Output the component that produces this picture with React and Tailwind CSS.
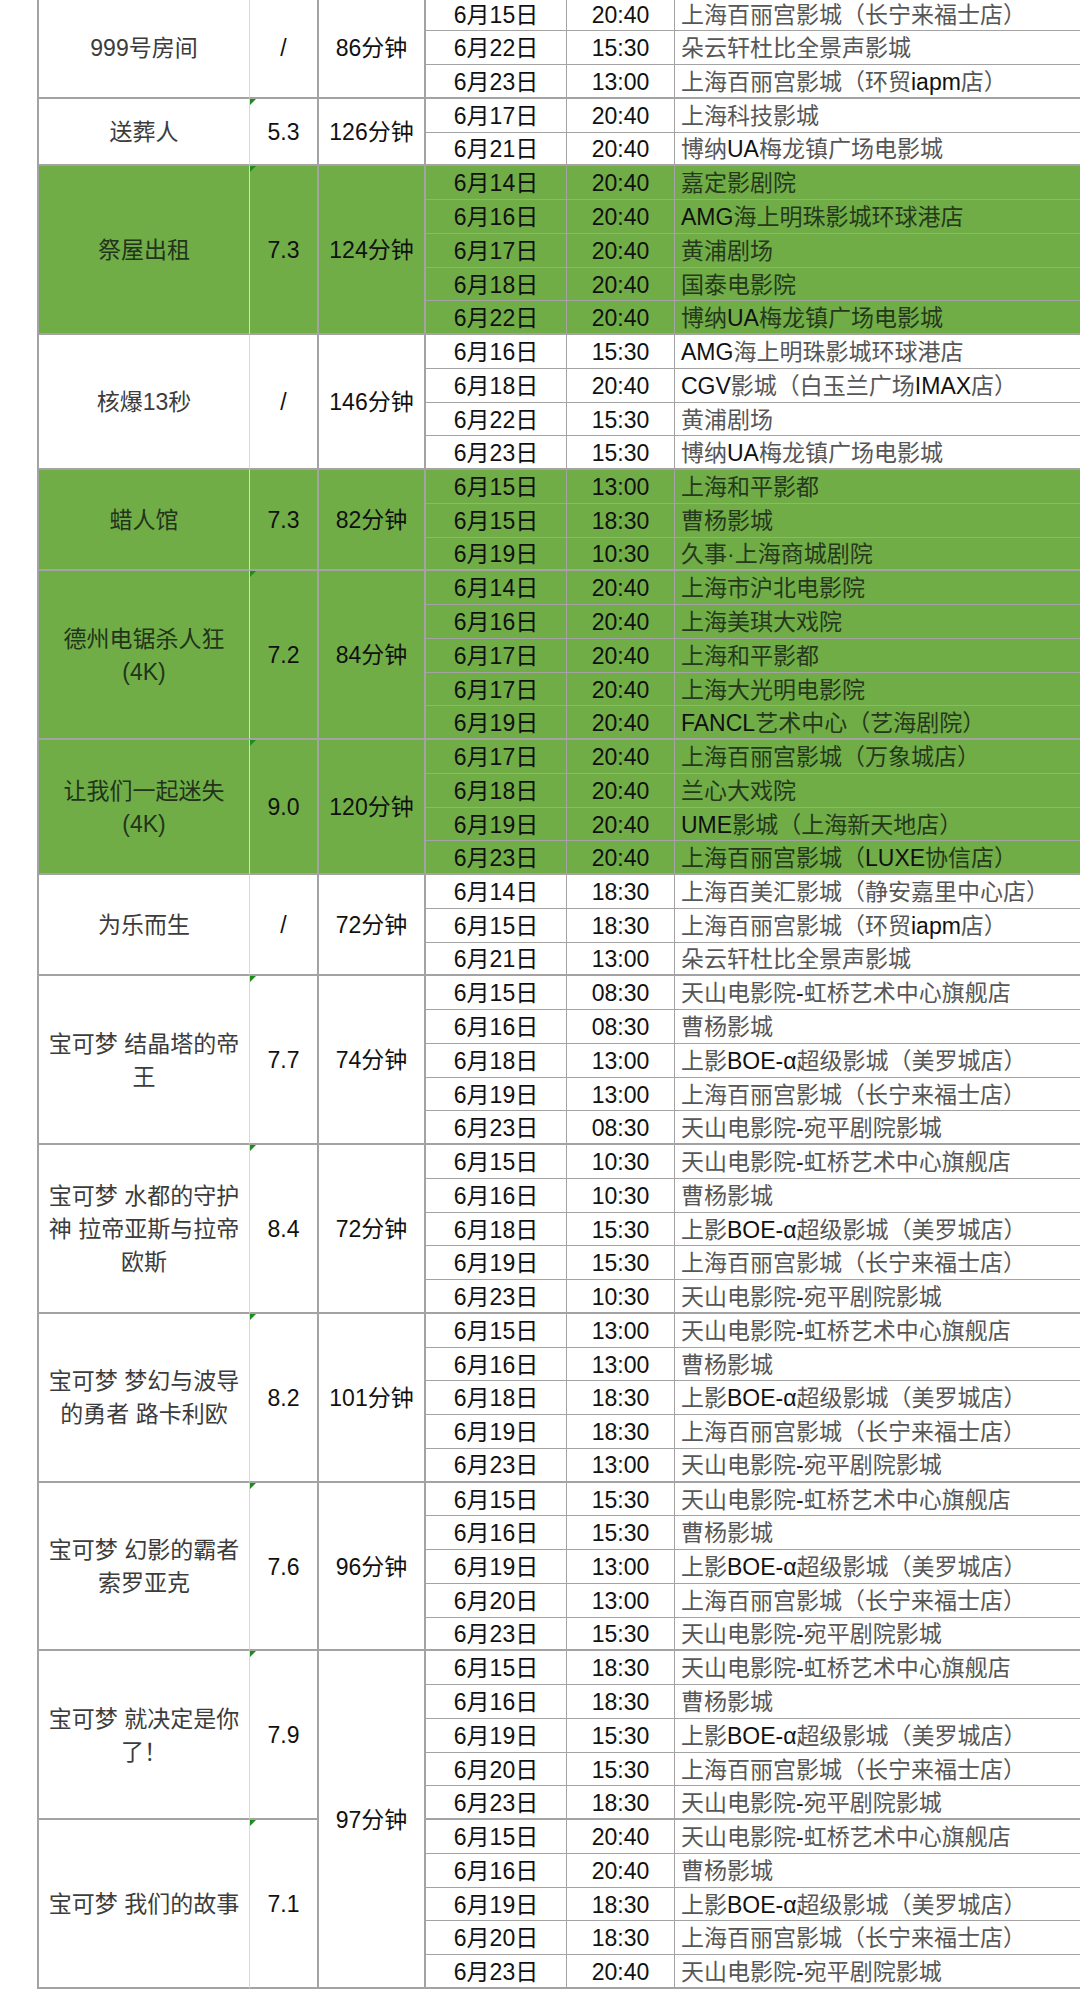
import React from "react"

const groups = [
  {
    title: ["999号房间"], rating: "/", dur: "86分钟",
    rows: [
      ["6月15日", "20:40", "上海百丽宫影城（长宁来福士店）"],
      ["6月22日", "15:30", "朵云轩杜比全景声影城"],
      ["6月23日", "13:00", "上海百丽宫影城（环贸iapm店）"],
    ],
  },
  {
    title: ["送葬人"], rating: "5.3", dur: "126分钟", mark: true,
    rows: [
      ["6月17日", "20:40", "上海科技影城"],
      ["6月21日", "20:40", "博纳UA梅龙镇广场电影城"],
    ],
  },
  {
    title: ["祭屋出租"], rating: "7.3", dur: "124分钟", green: true, mark: true,
    rows: [
      ["6月14日", "20:40", "嘉定影剧院"],
      ["6月16日", "20:40", "AMG海上明珠影城环球港店"],
      ["6月17日", "20:40", "黄浦剧场"],
      ["6月18日", "20:40", "国泰电影院"],
      ["6月22日", "20:40", "博纳UA梅龙镇广场电影城"],
    ],
  },
  {
    title: ["核爆13秒"], rating: "/", dur: "146分钟",
    rows: [
      ["6月16日", "15:30", "AMG海上明珠影城环球港店"],
      ["6月18日", "20:40", "CGV影城（白玉兰广场IMAX店）"],
      ["6月22日", "15:30", "黄浦剧场"],
      ["6月23日", "15:30", "博纳UA梅龙镇广场电影城"],
    ],
  },
  {
    title: ["蜡人馆"], rating: "7.3", dur: "82分钟", green: true,
    rows: [
      ["6月15日", "13:00", "上海和平影都"],
      ["6月15日", "18:30", "曹杨影城"],
      ["6月19日", "10:30", "久事·上海商城剧院"],
    ],
  },
  {
    title: ["德州电锯杀人狂", "(4K)"], rating: "7.2", dur: "84分钟", green: true, mark: true,
    rows: [
      ["6月14日", "20:40", "上海市沪北电影院"],
      ["6月16日", "20:40", "上海美琪大戏院"],
      ["6月17日", "20:40", "上海和平影都"],
      ["6月17日", "20:40", "上海大光明电影院"],
      ["6月19日", "20:40", "FANCL艺术中心（艺海剧院）"],
    ],
  },
  {
    title: ["让我们一起迷失", "(4K)"], rating: "9.0", dur: "120分钟", green: true, mark: true,
    rows: [
      ["6月17日", "20:40", "上海百丽宫影城（万象城店）"],
      ["6月18日", "20:40", "兰心大戏院"],
      ["6月19日", "20:40", "UME影城（上海新天地店）"],
      ["6月23日", "20:40", "上海百丽宫影城（LUXE协信店）"],
    ],
  },
  {
    title: ["为乐而生"], rating: "/", dur: "72分钟",
    rows: [
      ["6月14日", "18:30", "上海百美汇影城（静安嘉里中心店）"],
      ["6月15日", "18:30", "上海百丽宫影城（环贸iapm店）"],
      ["6月21日", "13:00", "朵云轩杜比全景声影城"],
    ],
  },
  {
    title: ["宝可梦 结晶塔的帝", "王"], rating: "7.7", dur: "74分钟", mark: true,
    rows: [
      ["6月15日", "08:30", "天山电影院-虹桥艺术中心旗舰店"],
      ["6月16日", "08:30", "曹杨影城"],
      ["6月18日", "13:00", "上影BOE-α超级影城（美罗城店）"],
      ["6月19日", "13:00", "上海百丽宫影城（长宁来福士店）"],
      ["6月23日", "08:30", "天山电影院-宛平剧院影城"],
    ],
  },
  {
    title: ["宝可梦 水都的守护", "神 拉帝亚斯与拉帝", "欧斯"], rating: "8.4", dur: "72分钟", mark: true,
    rows: [
      ["6月15日", "10:30", "天山电影院-虹桥艺术中心旗舰店"],
      ["6月16日", "10:30", "曹杨影城"],
      ["6月18日", "15:30", "上影BOE-α超级影城（美罗城店）"],
      ["6月19日", "15:30", "上海百丽宫影城（长宁来福士店）"],
      ["6月23日", "10:30", "天山电影院-宛平剧院影城"],
    ],
  },
  {
    title: ["宝可梦 梦幻与波导", "的勇者 路卡利欧"], rating: "8.2", dur: "101分钟", mark: true,
    rows: [
      ["6月15日", "13:00", "天山电影院-虹桥艺术中心旗舰店"],
      ["6月16日", "13:00", "曹杨影城"],
      ["6月18日", "18:30", "上影BOE-α超级影城（美罗城店）"],
      ["6月19日", "18:30", "上海百丽宫影城（长宁来福士店）"],
      ["6月23日", "13:00", "天山电影院-宛平剧院影城"],
    ],
  },
  {
    title: ["宝可梦 幻影的霸者", "索罗亚克"], rating: "7.6", dur: "96分钟", mark: true,
    rows: [
      ["6月15日", "15:30", "天山电影院-虹桥艺术中心旗舰店"],
      ["6月16日", "15:30", "曹杨影城"],
      ["6月19日", "13:00", "上影BOE-α超级影城（美罗城店）"],
      ["6月20日", "13:00", "上海百丽宫影城（长宁来福士店）"],
      ["6月23日", "15:30", "天山电影院-宛平剧院影城"],
    ],
  },
  {
    title: ["宝可梦 就决定是你", "了！"], rating: "7.9", dur: "97分钟", durSpan: 10, mark: true,
    rows: [
      ["6月15日", "18:30", "天山电影院-虹桥艺术中心旗舰店"],
      ["6月16日", "18:30", "曹杨影城"],
      ["6月19日", "15:30", "上影BOE-α超级影城（美罗城店）"],
      ["6月20日", "15:30", "上海百丽宫影城（长宁来福士店）"],
      ["6月23日", "18:30", "天山电影院-宛平剧院影城"],
    ],
  },
  {
    title: ["宝可梦 我们的故事"], rating: "7.1", mark: true,
    rows: [
      ["6月15日", "20:40", "天山电影院-虹桥艺术中心旗舰店"],
      ["6月16日", "20:40", "曹杨影城"],
      ["6月19日", "18:30", "上影BOE-α超级影城（美罗城店）"],
      ["6月20日", "18:30", "上海百丽宫影城（长宁来福士店）"],
      ["6月23日", "20:40", "天山电影院-宛平剧院影城"],
    ],
  },
]

const spans = {
  2: "row-span-2",
  3: "row-span-3",
  4: "row-span-4",
  5: "row-span-5",
  10: "row-span-10",
}

// CJK runs are lighter than the Latin text in the sheet
function Venue({ text, green }) {
  const parts = text.split(/([\u3000-\u303f\u4e00-\u9fff\uff00-\uffef·]+)/)
  return (
    <span className="whitespace-nowrap">
      {parts.map((p, i) =>
        /[\u3000-\u303f\u4e00-\u9fff\uff00-\uffef·]/.test(p) ? (
          <span key={i} className={green ? "text-[#26391c]" : "text-[#575757]"}>
            {p}
          </span>
        ) : (
          <span key={i}>{p}</span>
        )
      )}
    </span>
  )
}

export default function App() {
  const cells = []

  groups.forEach((g, gi) => {
    const n = g.rows.length
    const bg = g.green ? "bg-[#70ad47]" : "bg-white"

    cells.push(
      <div
        key={`t${gi}`}
        className={`${spans[n]} ${bg} flex flex-col items-center justify-center pt-[2px] leading-[33px] whitespace-nowrap border-r border-r-[#d9d9d9] border-b-2 border-b-[#a3a3a3] ${g.green ? "text-[#22341a]" : "text-[#3c3c3c]"}`}
      >
        {g.title.map((line, i) => (
          <span key={i}>{line}</span>
        ))}
      </div>
    )

    cells.push(
      <div
        key={`r${gi}`}
        className={`${spans[n]} ${bg} relative flex items-center justify-center pt-[2px] border-r-2 border-b-2 border-[#a3a3a3]`}
      >
        {g.mark && (
          <span className="absolute left-0 top-0 w-0 h-0 border-t-[6px] border-r-[6px] border-t-[#1d8c1d] border-r-transparent" />
        )}
        {g.rating}
      </div>
    )

    if (g.dur) {
      cells.push(
        <div
          key={`d${gi}`}
          className={`${spans[g.durSpan || n]} ${bg} flex items-center justify-center pt-[2px] border-r-2 border-b-2 border-[#a3a3a3]`}
        >
          {g.dur}
        </div>
      )
    }

    g.rows.forEach((r, ri) => {
      const bottom = ri === n - 1 ? "border-b-2" : "border-b"
      cells.push(
        <div
          key={`a${gi}-${ri}`}
          className={`${bg} flex items-center justify-center pt-[2px] border-r ${bottom} border-[#a3a3a3]`}
        >
          {r[0]}
        </div>,
        <div
          key={`b${gi}-${ri}`}
          className={`${bg} flex items-center justify-center pt-[2px] border-r ${bottom} border-[#a3a3a3]`}
        >
          {r[1]}
        </div>,
        <div
          key={`c${gi}-${ri}`}
          className={`${bg} flex items-center pl-[6px] pt-[2px] ${bottom} border-[#a3a3a3]`}
        >
          <Venue text={r[2]} green={g.green} />
        </div>
      )
    })
  })

  return (
    <div className="w-[1080px] h-[1989px] overflow-hidden bg-white font-['Liberation_Sans','Noto_Sans_CJK_SC',sans-serif] text-[23px] text-[#111]">
      <div className="ml-[37px] -mt-[2.5px] w-[1100px] border-l-2 border-[#a3a3a3] grid grid-cols-[211px_69px_107px_141px_108px_1fr] grid-rows-[repeat(59,33.75px)]">
        {cells}
      </div>
    </div>
  )
}
